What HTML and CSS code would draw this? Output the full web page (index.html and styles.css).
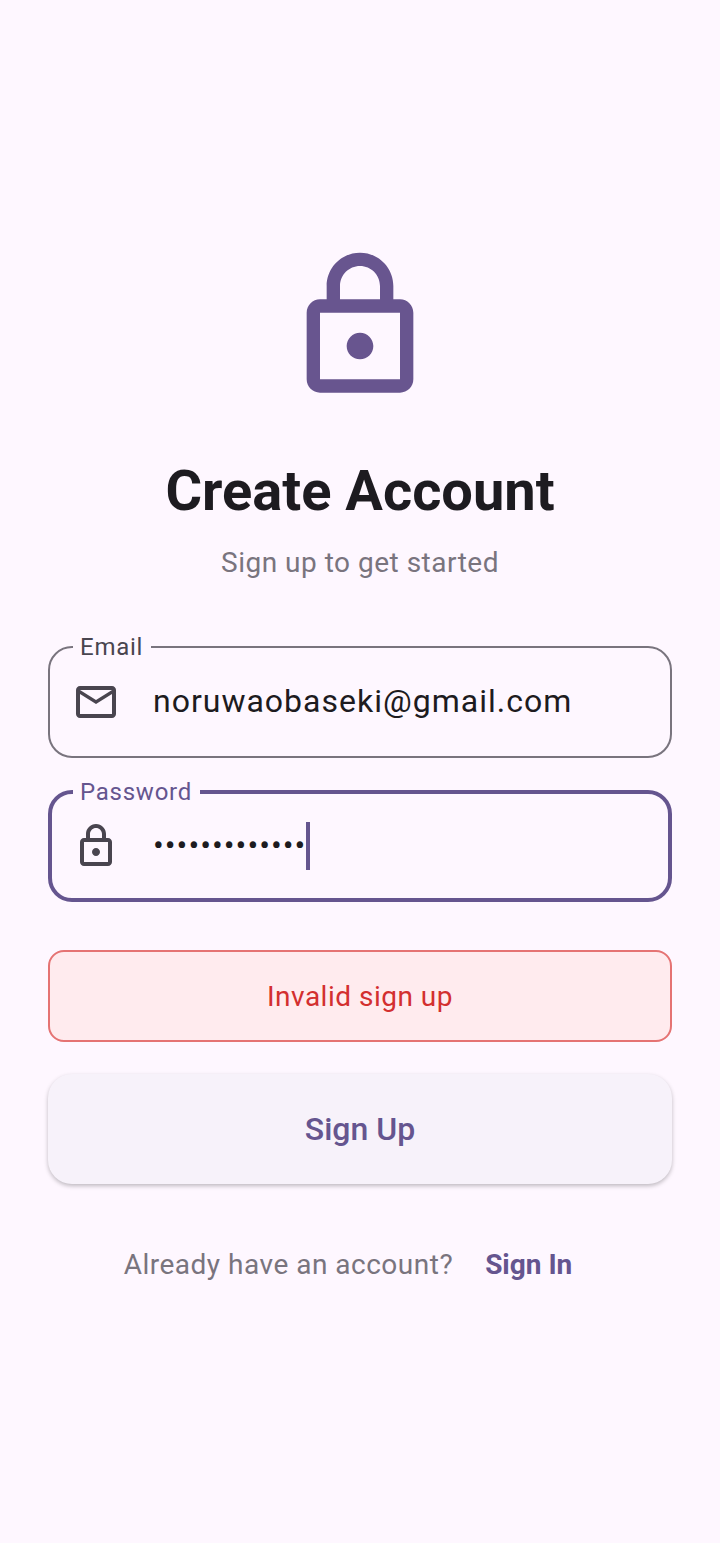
FILE: index.html
```html
<!DOCTYPE html>
<html lang="en">
<head>
    <meta charset="UTF-8">
    <meta name="viewport" content="width=device-width, initial-scale=1.0">
    <title>Create Account</title>
    <link rel="stylesheet" href="styles.css">
</head>
<body>

<div class="signup-container">
    <!-- logo -->
    <svg class="logo" viewBox="0 0 24 24" width="160" height="160">
        <path d="M18 8h-1V6c0-2.76-2.24-5-5-5S7 3.24 7 6v2H6c-1.1 0-2 .9-2 2v10c0 1.1.9 2 2 2h12c1.1 0 2-.9 2-2V10c0-1.1-.9-2-2-2zM9 6c0-1.66 1.34-3 3-3s3 1.34 3 3v2H9V6zm9 14H6V10h12v10zm-6-3c1.1 0 2-.9 2-2s-.9-2-2-2-2 .9-2 2 .9 2 2 2z"/>
    </svg>

    <h1>Create Account</h1>
    <p class="subtitle">Sign up to get started</p>

    <!-- email -->
    <div class="input-field">
        <span class="field-label">Email</span>
        <svg class="field-icon" viewBox="0 0 24 24" width="48" height="48">
            <path d="M20 4H4c-1.1 0-1.99.9-1.99 2L2 18c0 1.1.9 2 2 2h16c1.1 0 2-.9 2-2V6c0-1.1-.9-2-2-2zm0 14H4V8l8 5 8-5v10zm-8-7L4 6h16l-8 5z"/>
        </svg>
        <span class="field-value">noruwaobaseki@gmail.com</span>
    </div>

    <!-- password, focused -->
    <div class="input-field focused">
        <span class="field-label">Password</span>
        <svg class="field-icon" viewBox="0 0 24 24" width="48" height="48">
            <path d="M18 8h-1V6c0-2.76-2.24-5-5-5S7 3.24 7 6v2H6c-1.1 0-2 .9-2 2v10c0 1.1.9 2 2 2h12c1.1 0 2-.9 2-2V10c0-1.1-.9-2-2-2zM9 6c0-1.66 1.34-3 3-3s3 1.34 3 3v2H9V6zm9 14H6V10h12v10zm-6-3c1.1 0 2-.9 2-2s-.9-2-2-2-2 .9-2 2 .9 2 2 2z"/>
        </svg>
        <span class="field-value">•••••••••••••</span>
        <span class="caret"></span>
    </div>

    <div class="error-message">Invalid sign up</div>

    <button class="signup-button">Sign Up</button>

    <div class="signin-row">
        <span class="signin-text">Already have an account?</span>
        <a class="signin-link">Sign In</a>
    </div>
</div>

</body>
</html>
```

FILE: styles.css
```css
body {
    font-family: Roboto, "Liberation Sans", sans-serif;
    background-color: #fef7ff;
    color: #1d1b20;
    height: 1543px;
    margin: 0;
    overflow: hidden;
}
.signup-container {
    display: flex;
    flex-direction: column;
    align-items: stretch;
    padding: 246px 48px 0;
}
.logo {
    align-self: center;
    fill: #68558f;
}
h1 {
    margin: 47px 0 0;
    height: 76px;
    font-size: 56px;
    line-height: 76px;
    font-weight: 700;
    text-align: center;
}
.subtitle {
    margin: 14px 0 0;
    height: 40px;
    font-size: 28px;
    line-height: 40px;
    letter-spacing: 0.5px;
    color: #79747e;
    text-align: center;
}
.input-field {
    position: relative;
    display: flex;
    align-items: center;
    height: 112px;
    margin-top: 63px;
    padding-left: 22px;
    border: 2px solid #79747e;
    border-radius: 24px;
    box-sizing: border-box;
}
.input-field + .input-field {
    margin-top: 32px;
}
.input-field.focused {
    border: 4px solid #65558f;
    padding-left: 20px;
}
.field-label {
    position: absolute;
    top: -15px;
    left: 23px;
    padding: 0 8px 0 7px;
    height: 28px;
    font-size: 24px;
    line-height: 28px;
    letter-spacing: 0.75px;
    color: #49454f;
    background-color: #fef7ff;
}
.focused .field-label {
    top: -16px;
    left: 21px;
    color: #65558f;
}
.field-icon {
    flex: none;
    fill: #49454f;
}
.field-value {
    margin: 0 0 2px 33px;
    font-size: 32px;
    line-height: 48px;
    letter-spacing: 1px;
}
.caret {
    width: 4px;
    height: 48px;
    background-color: #65558f;
}
.error-message {
    height: 92px;
    margin-top: 48px;
    border: 2px solid #e57373;
    border-radius: 16px;
    box-sizing: border-box;
    background-color: #ffebee;
    color: #d32f2f;
    font-size: 28px;
    line-height: 90px;
    letter-spacing: 0.5px;
    text-align: center;
}
.signup-button {
    height: 110px;
    margin-top: 32px;
    border: none;
    border-radius: 24px;
    background-color: #f7f2fa;
    color: #65558f;
    font-family: inherit;
    font-size: 32px;
    font-weight: 500;
    box-shadow: 0 2px 4px rgba(0, 0, 0, 0.25);
}
.signin-row {
    display: flex;
    justify-content: center;
    align-items: center;
    gap: 32px;
    margin-top: 61px;
    padding-right: 24px;
    height: 40px;
    font-size: 28px;
    line-height: 40px;
}
.signin-text {
    color: #79747e;
    letter-spacing: 0.5px;
}
.signin-link {
    color: #65558f;
    font-weight: 700;
}
```
